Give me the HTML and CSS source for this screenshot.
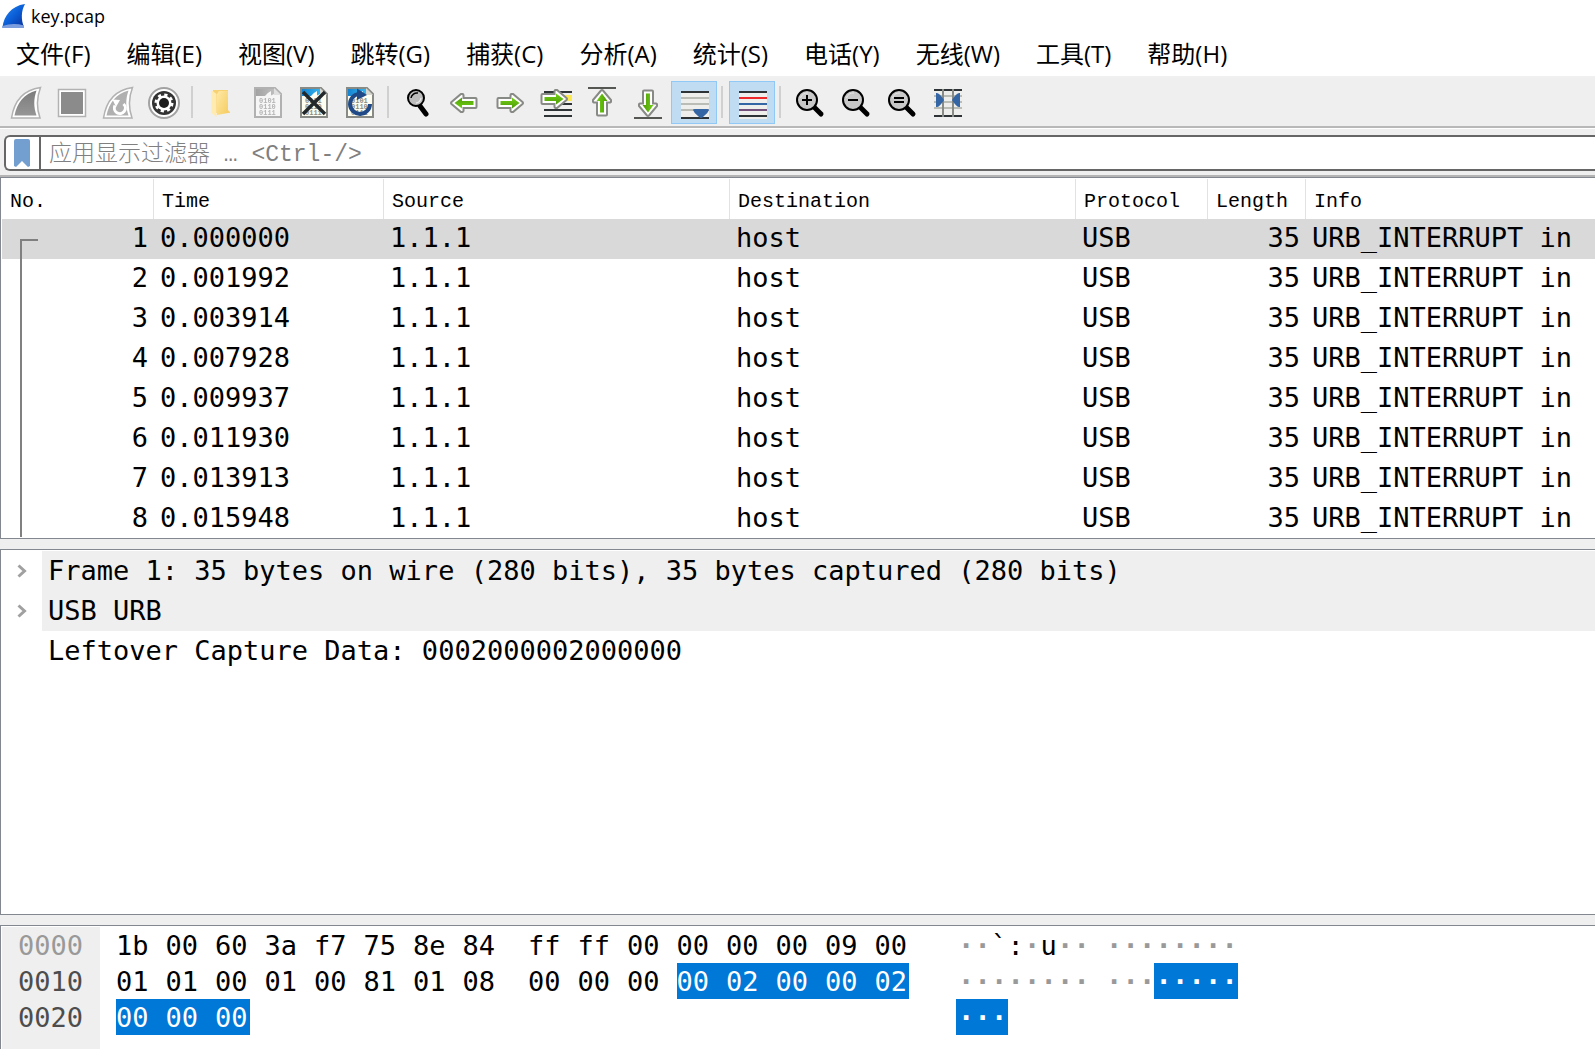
FILE: index.html
```html
<!DOCTYPE html>
<html lang="zh-CN">
<head>
<meta charset="utf-8">
<title>key.pcap</title>
<meta name="viewport" content="width=device-width, initial-scale=1">
<link rel="stylesheet" href="styles.css">
</head>
<body>
<svg class="defs" width="0" height="0" aria-hidden="true">
  <defs>
    <linearGradient id="fin-blue" x1="0" y1="0" x2="1" y2="1"><stop offset="0" stop-color="#2a8cf0"/><stop offset="0.5" stop-color="#0b5fd8"/><stop offset="1" stop-color="#0a2f9a"/></linearGradient>
    <linearGradient id="fin-gray" x1="0" y1="0" x2="0" y2="1"><stop offset="0" stop-color="#7c7c7c"/><stop offset="1" stop-color="#969696"/></linearGradient>
    <linearGradient id="folder" x1="0" y1="0" x2="1" y2="1"><stop offset="0" stop-color="#ffe9a6"/><stop offset="1" stop-color="#f5cc60"/></linearGradient>
    <linearGradient id="green" x1="0" y1="0" x2="0" y2="1"><stop offset="0" stop-color="#73d216"/><stop offset="1" stop-color="#4e9a06"/></linearGradient>
    <linearGradient id="sky" x1="0" y1="0" x2="1" y2="0"><stop offset="0" stop-color="#1583cf"/><stop offset="1" stop-color="#35b4f0"/></linearGradient>
    <symbol id="arrow" viewBox="0 0 28 20">
      <path d="M1.500 6 Q1.500 5 2.500 5 H14.500 V2 Q15 0.500 17 1 L26.500 9 Q27.500 10 26.500 11 L17 19 Q15 19.500 14.500 18 V15 H2.500 Q1.500 15 1.500 14 Z" fill="#fff" stroke="#888a85" stroke-width="2"/>
      <path d="M4.500 8 H16 V4.500 L23.500 10 L16 15.500 V12 H4.500 Z" fill="url(#green)"/>
    </symbol>
    <symbol id="lens" viewBox="0 0 30 30">
      <path d="M19 19 L26 26" stroke="#000" stroke-width="5" stroke-linecap="round"/>
      <circle cx="12" cy="12" r="10" fill="#c8c8c8" stroke="#000" stroke-width="2"/>
      <path d="M5.500 10 A7 7 0 0 1 13 5" fill="none" stroke="#e6e6e6" stroke-width="1"/>
    </symbol>
    <symbol id="sheet" viewBox="0 0 30 33">
      <path d="M2 2 H22 L28 8 V31 H2 Z" fill="#fdfdf2" stroke="#888a85" stroke-width="2"/>
      <path d="M3 3 H21 V8 L18 9.500 V5 Q14 7 12 10 H3 Z" fill="url(#sky)"/>
      <path d="M21 2 V9 H28 Z" fill="#d8d8d0"/>
      <g class="bits" fill="#8d8d80"><text x="6" y="17">0101</text><text x="6" y="23">0110</text><text x="6" y="29">0111</text></g>
    </symbol>
  </defs>
</svg>

<header class="titlebar">
  <svg class="logo" width="24" height="26" viewBox="0 0 24 26" aria-hidden="true"><path d="M0.500 24 C2 13 9 3 23 1 C19 8 19 17 22 24 Z" fill="url(#fin-blue)"/><path d="M0.500 23 Q11 19.500 22 22.500 V25 H0 Z" fill="#7d9ede"/></svg>
  <h1>key.pcap</h1>
</header>

<nav class="menubar" aria-label="主菜单">
  <button>文件(F)</button>
  <button>编辑(E)</button>
  <button>视图(V)</button>
  <button>跳转(G)</button>
  <button>捕获(C)</button>
  <button>分析(A)</button>
  <button>统计(S)</button>
  <button>电话(Y)</button>
  <button>无线(W)</button>
  <button>工具(T)</button>
  <button>帮助(H)</button>
</nav>

<div class="toolbar" role="toolbar" aria-label="工具栏">
  <button aria-label="开始捕获"><svg viewBox="0 0 46 43"><path d="M8.500 37 C11 21 20 9 37.500 6.500 C33.500 17 33.500 27 37 37 Z" fill="#fff" stroke="#b2b2b2" stroke-width="1.500"/><path d="M11.500 34.500 C14 22 21 12.500 33.500 9.500 C30.500 18 30.500 26 33.500 34.500 Z" fill="url(#fin-gray)"/></svg></button>
  <button aria-label="停止捕获"><svg viewBox="0 0 46 43"><path d="M9.500 8.500 H36.500 V35.500 H9.500 Z" fill="#fff" stroke="#b2b2b2" stroke-width="1.500"/><path d="M12 11 H34 V33 H12 Z" fill="#8b8b8b"/></svg></button>
  <button aria-label="重新开始捕获"><svg viewBox="0 0 46 43"><path d="M8.500 37 C11 21 20 9 37.500 6.500 C33.500 17 33.500 27 37 37 Z" fill="#fff" stroke="#b2b2b2" stroke-width="1.500"/><path d="M11.500 34.500 C14 22 21 12.500 33.500 9.500 C30.500 18 30.500 26 33.500 34.500 Z" fill="#b0b0b0"/><path d="M28.500 23 A5.500 5.500 0 1 1 20 24.500" fill="none" stroke="#fff" stroke-width="3"/><path d="M17.500 18.500 L25 19 L21 26 Z" fill="#fff"/></svg></button>
  <button aria-label="捕获选项"><svg viewBox="0 0 46 43"><circle cx="23" cy="22" r="15" fill="#fff" stroke="#a2a2a2" stroke-width="2"/><circle cx="23" cy="22" r="12" fill="#333"/><circle cx="23" cy="22" r="8" fill="none" stroke="#fff" stroke-width="3" stroke-dasharray="3.142 3.142"/><circle cx="23" cy="22" r="7.500" fill="#fff"/><circle cx="23" cy="22" r="5" fill="#1c1c1c"/></svg></button>
  <span class="sep"></span>
  <button aria-label="打开"><svg viewBox="0 0 46 43"><path d="M14 9 H29 V29 L31 31 V32 H14 Z" fill="#f7d274"/><path d="M12.500 9 L17.500 13 V36 L12.500 32 Z" fill="#ffeab0"/><path d="M18 13 L20 10 H29 V32 L18 34 Z" fill="url(#folder)"/></svg></button>
  <button aria-label="保存"><svg viewBox="0 0 46 43"><g class="muted"><use href="#sheet" x="8" y="5" width="30" height="33"/></g></svg></button>
  <button aria-label="关闭"><svg viewBox="0 0 46 43"><use href="#sheet" x="8" y="5" width="30" height="33"/><path d="M12 11 L34 33 M34 11 L12 33" stroke="#23292b" stroke-width="3.500"/></svg></button>
  <button aria-label="重新加载"><svg viewBox="0 0 46 43"><use href="#sheet" x="8" y="5" width="30" height="33"/><path d="M33 23 A10 10 0 1 1 22 13" fill="none" stroke="#204a87" stroke-width="4"/><path d="M20 7.500 L30 14 L20 19 Z" fill="#204a87"/></svg></button>
  <span class="sep"></span>
  <button aria-label="查找"><svg viewBox="0 0 46 43"><path d="M25 25 L31 33" stroke="#000" stroke-width="5" stroke-linecap="round"/><circle cx="21" cy="17" r="8" fill="#bdbdbd" stroke="#000" stroke-width="2"/><path d="M16 17 A6 6 0 0 1 23 12" fill="none" stroke="#000" stroke-width="1.500"/><path d="M21 22 A6 6 0 0 0 26 17" fill="none" stroke="#e8e8e8" stroke-width="1.500"/></svg></button>
  <button aria-label="后退"><svg viewBox="0 0 46 43"><use href="#arrow" x="9" y="12" width="28" height="20" transform="rotate(180 23 22)"/></svg></button>
  <button aria-label="前进"><svg viewBox="0 0 46 43"><use href="#arrow" x="9" y="12" width="28" height="20"/></svg></button>
  <button aria-label="转到分组"><svg viewBox="0 0 46 43"><path d="M11 11 H39 M11 23 H39 M11 29 H39 M11 35 H39" stroke="#2e3436" stroke-width="2"/><path d="M30 14 H39 V20 H30 Z" fill="#fce94f"/><use href="#arrow" x="7" y="8" width="28" height="20"/></svg></button>
  <button aria-label="首个分组"><svg viewBox="0 0 46 43"><path d="M9 7 H37" stroke="#555753" stroke-width="2"/><use href="#arrow" x="9" y="12" width="28" height="20" transform="rotate(-90 23 22)"/></svg></button>
  <button aria-label="最新分组"><svg viewBox="0 0 46 43"><path d="M9 37 H37" stroke="#555753" stroke-width="2"/><use href="#arrow" x="9" y="12" width="28" height="20" transform="rotate(90 23 22)"/></svg></button>
  <button class="on" aria-pressed="true" aria-label="自动滚动"><svg viewBox="0 0 46 43"><path d="M10 10 H38 V38 H10 Z" fill="#eeeeec"/><path d="M10 17 H38 M10 23 H38 M10 29 H38" stroke="#babdb6" stroke-width="2"/><path d="M10 11 H38 M10 37 H38" stroke="#2e3436" stroke-width="2"/><path d="M22 29 Q22 28 24 28 H36 Q38 28 38 29 Q37 32 33 35 Q30 39 27 35 Q23 32 22 29 Z" fill="#3465a4"/></svg></button>
  <span class="sep"></span>
  <button class="on" aria-pressed="true" aria-label="着色分组"><svg viewBox="0 0 46 43"><path d="M10 10 H38 V38 H10 Z" fill="#eeeeec"/><path d="M10 11 H38 M10 35 H38" stroke="#2e3436" stroke-width="2"/><path d="M10 17 H38" stroke="#ef2929" stroke-width="2"/><path d="M10 23 H38" stroke="#3465a4" stroke-width="2"/><path d="M10 29 H38" stroke="#75507b" stroke-width="2"/></svg></button>
  <span class="sep"></span>
  <button aria-label="放大"><svg viewBox="0 0 46 43"><use href="#lens" x="8" y="7" width="30" height="30"/><path d="M15 19 H25 M20 14 V24" stroke="#000" stroke-width="2"/></svg></button>
  <button aria-label="缩小"><svg viewBox="0 0 46 43"><use href="#lens" x="8" y="7" width="30" height="30"/><path d="M15 19 H25" stroke="#000" stroke-width="2"/></svg></button>
  <button aria-label="普通大小"><svg viewBox="0 0 46 43"><use href="#lens" x="8" y="7" width="30" height="30"/><path d="M15 17 H25 M15 21 H25" stroke="#000" stroke-width="2"/></svg></button>
  <button aria-label="调整列宽"><svg viewBox="0 0 46 43"><path d="M9 9 H37 V36 H9 Z" fill="#eeeeec"/><path d="M9 15 H37 M9 21 H37 M9 27 H37" stroke="#babdb6" stroke-width="2"/><path d="M9 9 H37 M9 35 H37" stroke="#2e3436" stroke-width="2"/><path d="M18 8 V36 M28 8 V36" stroke="#888a85" stroke-width="2"/><path d="M11 12 Q14 11 19 19 Q14 27 11 26 Z M35 12 Q32 11 27 19 Q32 27 35 26 Z" fill="#3465a4"/></svg></button>
</div>

<form class="filterbar">
  <div class="filter">
    <button type="button" class="bookmark" aria-label="书签"><svg width="16" height="28" viewBox="0 0 16 28"><path d="M0 2 Q0 0 2 0 H14 Q16 0 16 2 V27 L14 28 L8 22 L2 28 L0 27 Z" fill="#729fcf"/></svg></button>
    <input type="text" aria-label="显示过滤器" placeholder="应用显示过滤器 … &lt;Ctrl-/&gt;">
  </div>
</form>

<main>
  <section class="pane packets">
    <table>
      <colgroup><col class="c-no"><col class="c-time"><col class="c-addr"><col class="c-addr"><col class="c-proto"><col class="c-len"><col></colgroup>
      <thead><tr><th>No.</th><th>Time</th><th>Source</th><th>Destination</th><th>Protocol</th><th>Length</th><th>Info</th></tr></thead>
      <tbody>
        <tr class="current"><td class="num">1</td><td>0.000000</td><td>1.1.1</td><td>host</td><td>USB</td><td class="num">35</td><td>URB_INTERRUPT in</td></tr>
        <tr><td class="num">2</td><td>0.001992</td><td>1.1.1</td><td>host</td><td>USB</td><td class="num">35</td><td>URB_INTERRUPT in</td></tr>
        <tr><td class="num">3</td><td>0.003914</td><td>1.1.1</td><td>host</td><td>USB</td><td class="num">35</td><td>URB_INTERRUPT in</td></tr>
        <tr><td class="num">4</td><td>0.007928</td><td>1.1.1</td><td>host</td><td>USB</td><td class="num">35</td><td>URB_INTERRUPT in</td></tr>
        <tr><td class="num">5</td><td>0.009937</td><td>1.1.1</td><td>host</td><td>USB</td><td class="num">35</td><td>URB_INTERRUPT in</td></tr>
        <tr><td class="num">6</td><td>0.011930</td><td>1.1.1</td><td>host</td><td>USB</td><td class="num">35</td><td>URB_INTERRUPT in</td></tr>
        <tr><td class="num">7</td><td>0.013913</td><td>1.1.1</td><td>host</td><td>USB</td><td class="num">35</td><td>URB_INTERRUPT in</td></tr>
        <tr><td class="num">8</td><td>0.015948</td><td>1.1.1</td><td>host</td><td>USB</td><td class="num">35</td><td>URB_INTERRUPT in</td></tr>
      </tbody>
    </table>
    <span class="related"></span>
  </section>

  <section class="pane details">
    <ul>
      <li><button aria-label="展开"><svg width="10" height="14" viewBox="0 0 10 14"><path d="M1.500 1.500 L7.500 7 L1.500 12.500" fill="none" stroke="#a0a0a0" stroke-width="3"/></svg></button><span class="shaded">Frame 1: 35 bytes on wire (280 bits), 35 bytes captured (280 bits)</span></li>
      <li><button aria-label="展开"><svg width="10" height="14" viewBox="0 0 10 14"><path d="M1.500 1.500 L7.500 7 L1.500 12.500" fill="none" stroke="#a0a0a0" stroke-width="3"/></svg></button><span class="shaded">USB URB</span></li>
      <li class="leaf"><span>Leftover Capture Data: 0002000002000000</span></li>
    </ul>
  </section>

  <section class="pane bytes">
    <div class="offsets"><span class="dim">0000</span><span>0010</span><span>0020</span></div>
    <div class="hex">
      <span>1b</span><span>00</span><span>60</span><span>3a</span><span>f7</span><span>75</span><span>8e</span><span>84</span>
      <span>01</span><span>01</span><span>00</span><span>01</span><span>00</span><span>81</span><span>01</span><span>08</span>
      <span class="sel">00</span><span class="sel">00</span><span class="sel last">00</span>
    </div>
    <div class="hex">
      <span>ff</span><span>ff</span><span>00</span><span>00</span><span>00</span><span>00</span><span>09</span><span>00</span>
      <span>00</span><span>00</span><span>00</span><span class="sel">00</span><span class="sel">02</span><span class="sel">00</span><span class="sel">00</span><span class="sel last">02</span>
    </div>
    <div class="ascii">
      <span>·</span><span>·</span><b>`</b><b>:</b><span>·</span><b>u</b><span>·</span><span>·</span>
      <span>·</span><span>·</span><span>·</span><span>·</span><span>·</span><span>·</span><span>·</span><span>·</span>
      <span class="sel">·</span><span class="sel">·</span><span class="sel last">·</span>
    </div>
    <div class="ascii">
      <span>·</span><span>·</span><span>·</span><span>·</span><span>·</span><span>·</span><span>·</span><span>·</span>
      <span>·</span><span>·</span><span>·</span><span class="sel">·</span><span class="sel">·</span><span class="sel">·</span><span class="sel">·</span><span class="sel last">·</span>
    </div>
  </section>
</main>
</body>
</html>
```
FILE: styles.css
```css
* { box-sizing: border-box; }

body {
  margin: 0;
  min-height: 100vh;
  display: flex;
  flex-direction: column;
  background: #fff;
  color: #000;
  font-family: "Open Sans", "Noto Sans CJK SC", sans-serif;
  overflow-x: hidden;
}

button {
  margin: 0;
  padding: 0;
  border: 0;
  background: none;
  color: inherit;
  font: inherit;
}

.defs { position: absolute; }

.titlebar {
  display: flex;
  align-items: center;
  gap: 5px;
  height: 32px;
  padding-left: 2px;
}

.titlebar h1 {
  margin: 0;
  font-size: 18px;
  line-height: 24px;
  font-weight: 400;
}

.menubar {
  display: flex;
  gap: 36px;
  height: 44px;
  padding: 0 0 4px 16px;
  font-size: 24px;
  white-space: nowrap;
}

.toolbar {
  display: flex;
  height: 52px;
  padding: 3px;
  border-top: 2px solid #f0f0f0;
  border-bottom: 2px solid #b8b8b8;
  background: #efefef;
}

.toolbar button {
  flex: none;
  width: 46px;
  height: 43px;
}

.toolbar svg {
  display: block;
  width: 46px;
  height: 43px;
}

.toolbar .on {
  background: #c0dcf3;
  box-shadow: inset 0 0 0 1px #90c8f6;
}

.sep {
  flex: none;
  width: 12px;
  height: 32px;
  margin-top: 5px;
  background: linear-gradient(#d0d0d0, #d0d0d0) 4px 0 / 2px 100% no-repeat;
}

.bits {
  font-family: "Liberation Mono", monospace;
  font-size: 7px;
  font-weight: 700;
}

.muted { filter: grayscale(1); opacity: 0.6; }

.filterbar {
  height: 49px;
  padding: 6px 0 3px 4px;
  border-top: 1px solid #fff;
  border-bottom: 2px solid #b4b4b4;
  background: #efefef;
}

.filter {
  display: flex;
  height: 36px;
  border: 2px solid #666;
  border-right: 0;
  border-radius: 6px 0 0 6px;
  background: #fff;
}

.bookmark {
  display: flex;
  justify-content: center;
  align-items: center;
  width: 35px;
  padding-right: 2px;
  border-right: 2px solid #666;
}

.filter input {
  flex: 1;
  min-width: 0;
  padding: 4px 8px 0;
  border: 0;
  outline: 0;
  background: none;
  font-family: "Liberation Mono", "Noto Sans CJK SC", monospace;
  font-size: 23px;
  font-weight: 300;
}

.filter input::placeholder { color: #808080; opacity: 1; }

main {
  flex: 1;
  display: flex;
  flex-direction: column;
  gap: 10px;
  background: #efefef;
  font-family: "DejaVu Sans Mono", monospace;
  font-size: 27px;
  white-space: nowrap;
}

.pane {
  border: 1px solid #828790;
  border-right: 0;
  padding: 1px 0 0 1px;
  background: #fff;
}

.packets {
  position: relative;
  overflow: hidden;
}

.packets table {
  width: 100%;
  margin-bottom: -1px;
  table-layout: fixed;
  border-collapse: separate;
  border-spacing: 0;
}

.c-no { width: 152px; }
.c-time { width: 230px; }
.c-addr { width: 346px; }
.c-proto { width: 132px; }
.c-len { width: 98px; }

.packets th {
  height: 40px;
  padding: 4px 8px 0;
  border-right: 1px solid #e2e2e2;
  font-family: "Liberation Mono", monospace;
  font-size: 20px;
  font-weight: 400;
  text-align: left;
}

.packets th:last-child { border-right: 0; }

.packets td {
  height: 40px;
  padding: 0 6px;
  line-height: 38px;
  vertical-align: top;
}

.packets .num { text-align: right; }

.current { background: #d9d9d9; }

/* bracket that links the packets of one conversation */
.related {
  position: absolute;
  left: 19px;
  top: 61px;
  bottom: 1px;
  width: 18px;
  border-top: 2px solid #808080;
  border-left: 2px solid #808080;
}

.details { flex: 1; }

.details ul {
  margin: 0;
  padding: 0;
  list-style: none;
}

.details li {
  display: flex;
  height: 40px;
  line-height: 40px;
}

.details button {
  display: flex;
  justify-content: center;
  align-items: center;
  width: 40px;
}

.details span {
  flex: 1;
  padding-left: 6px;
}

.details .leaf { padding-left: 40px; }

.shaded { background: #efefef; }

.bytes {
  display: flex;
  height: 124px;
  border-bottom: 0;
  line-height: 38px;
}

.offsets {
  display: grid;
  grid-auto-rows: 36px;
  flex: none;
  width: 98px;
  margin-right: 16px;
  padding-left: 16px;
  background: #efefef;
  color: #4d4d4d;
}

.offsets .dim { color: #999; }

.hex, .ascii {
  display: grid;
  grid-template-columns: repeat(8, 1fr);
  grid-auto-rows: 36px;
  flex: none;
  margin-right: 16px;
}

.hex { width: 396px; }

.hex + .ascii { margin-left: 16px; }

.ascii {
  width: 132px;
  color: #999;
}

.ascii span, .ascii b {
  min-width: 0;
  padding-left: 2px;
}

.ascii span { font-weight: 700; }

.ascii b {
  color: #000;
  font-weight: 400;
}

.hex .sel, .ascii .sel {
  background: #0078d7;
  color: #fff;
}

.hex .last { margin-right: 15px; }

.ascii .last { margin-right: -2px; }
```
